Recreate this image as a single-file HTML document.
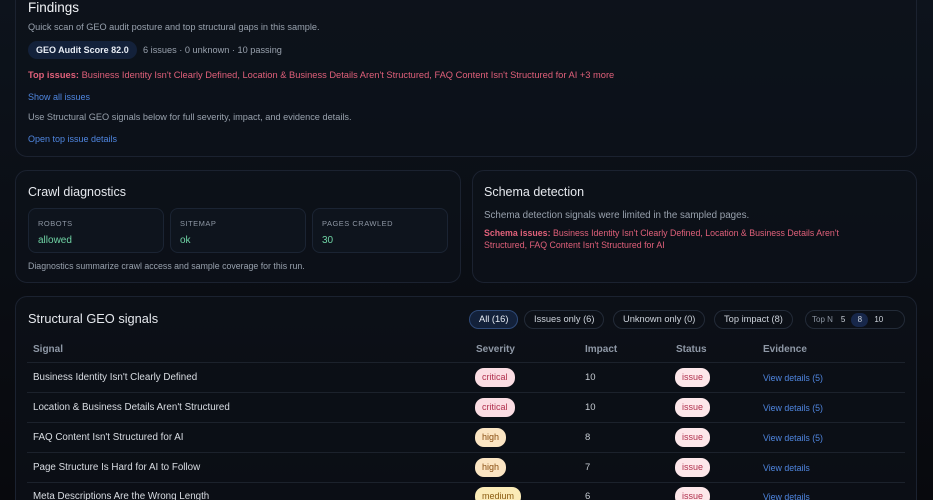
<!DOCTYPE html><html style="width:933px;height:500px;overflow:hidden;background:#08090d"><head><style>
*{box-sizing:border-box;margin:0;padding:0}
body{width:933px;height:500px;overflow:hidden;background:linear-gradient(180deg,#0d131c 0%,#0a0d13 60%,#08090d 100%);font-family:"Liberation Sans",sans-serif;color:#e6e9ee;position:relative}
.card{position:absolute;border:1px solid #1b2230;border-radius:12px;background:rgba(14,19,27,.6)}
.a{position:absolute;white-space:nowrap}
.m{color:#98a1ad;font-size:9px}
.lnk{color:#4f86e0;font-size:9px}
.red{color:#e0607a;font-size:9px}
.stat{position:absolute;top:208px;height:45px;border:1px solid #1b2433;border-radius:8px;background:#0e141d}
.stat .l{position:absolute;left:9px;top:10px;font-size:7.5px;letter-spacing:.5px;color:#8d96a3}
.stat .v{position:absolute;left:9px;top:26px;font-size:10px;color:#6fd3a4}
.pill{position:absolute;height:19px;border:1px solid #232b38;border-radius:10px;font-size:9.3px;color:#cdd3db;line-height:17px;padding:0 9px;top:310px}
.hd{position:absolute;top:344px;font-size:10px;color:#8f98a6;font-weight:bold}
.ln{position:absolute;left:27px;width:878px;height:1px;background:#1c222c}
.sig{position:absolute;left:33px;font-size:9.8px;color:#d9dde3}
.b{position:absolute;height:19px;border-radius:9px;font-size:9px;line-height:19px;padding:0 7px}
.crit{background:#fbdde3;color:#b0304d}
.high{background:#fbe5c3;color:#8a4f12}
.med{background:#fbebb7;color:#8a5c10}
.iss{background:#fde7ea;color:#b0304d;left:675px}
.imp{position:absolute;left:585px;font-size:9.5px;color:#c7ccd3}
.ev{position:absolute;left:763px;font-size:8.8px;color:#4f86e0}
</style></head><body>
<div class="card" style="left:15px;top:-12px;width:902px;height:169px"></div>
<div class="a" style="left:28px;top:0px;font-size:13.5px;color:#f1f3f6">Findings</div>
<div class="a m" style="left:28px;top:22px;font-size:9.2px">Quick scan of GEO audit posture and top structural gaps in this sample.</div>
<div class="a" style="left:28px;top:41px;height:18px;padding:0 8px;border-radius:9px;background:#13213a;font-size:9px;line-height:18px;color:#e8edf5;font-weight:bold">GEO Audit Score 82.0</div>
<div class="a m" style="left:143px;top:45px;font-size:9.2px">6 issues · 0 unknown · 10 passing</div>
<div class="a red" style="left:28px;top:70px;font-size:9.3px"><b>Top issues:</b> Business Identity Isn't Clearly Defined, Location &amp; Business Details Aren't Structured, FAQ Content Isn't Structured for AI +3 more</div>
<div class="a lnk" style="left:28px;top:92px">Show all issues</div>
<div class="a m" style="left:28px;top:112px;font-size:9.2px">Use Structural GEO signals below for full severity, impact, and evidence details.</div>
<div class="a lnk" style="left:28px;top:134px">Open top issue details</div>

<div class="card" style="left:15px;top:170px;width:446px;height:113px"></div>
<div class="a" style="left:28px;top:185px;font-size:12.5px">Crawl diagnostics</div>
<div class="stat" style="left:28px;width:136px"><div class="l">ROBOTS</div><div class="v">allowed</div></div>
<div class="stat" style="left:170px;width:136px"><div class="l">SITEMAP</div><div class="v">ok</div></div>
<div class="stat" style="left:312px;width:136px"><div class="l">PAGES CRAWLED</div><div class="v">30</div></div>
<div class="a m" style="left:28px;top:261px;font-size:8.8px">Diagnostics summarize crawl access and sample coverage for this run.</div>

<div class="card" style="left:472px;top:170px;width:445px;height:113px"></div>
<div class="a" style="left:484px;top:185px;font-size:12.5px">Schema detection</div>
<div class="a m" style="left:484px;top:210px;font-size:9.8px">Schema detection signals were limited in the sampled pages.</div>
<div class="a red" style="left:484px;top:227px;font-size:8.8px;white-space:normal;width:385px;line-height:12px"><b>Schema issues:</b> Business Identity Isn't Clearly Defined, Location &amp; Business Details Aren't Structured, FAQ Content Isn't Structured for AI</div>

<div class="card" style="left:15px;top:296px;width:902px;height:220px"></div>
<div class="a" style="left:28px;top:311px;font-size:12.8px">Structural GEO signals</div>
<div class="pill" style="left:469px;background:#13213a;border-color:#2f4a78;color:#e8edf5">All (16)</div>
<div class="pill" style="left:524px">Issues only (6)</div>
<div class="pill" style="left:613px">Unknown only (0)</div>
<div class="pill" style="left:714px">Top impact (8)</div>
<div class="pill" style="left:805px;width:100px;padding:0 6px;font-size:8px"><span style="color:#8d96a3">Top N</span><span style="margin-left:8px">5</span><span style="display:inline-block;margin-left:6px;width:17px;height:14px;line-height:14px;text-align:center;border-radius:7px;background:#17274a">8</span><span style="margin-left:6px">10</span></div>
<div class="hd" style="left:33px">Signal</div><div class="hd" style="left:476px">Severity</div><div class="hd" style="left:585px">Impact</div><div class="hd" style="left:676px">Status</div><div class="hd" style="left:763px">Evidence</div>
<div class="ln" style="top:362px"></div><div class="ln" style="top:392px"></div><div class="ln" style="top:422px"></div><div class="ln" style="top:452px"></div><div class="ln" style="top:482px"></div>

<div class="sig" style="top:372px">Business Identity Isn't Clearly Defined</div>
<div class="b crit" style="left:475px;top:368px">critical</div><div class="imp" style="top:372px">10</div><div class="b iss" style="top:368px">issue</div><div class="ev" style="top:373px">View details (5)</div>

<div class="sig" style="top:402px">Location &amp; Business Details Aren't Structured</div>
<div class="b crit" style="left:475px;top:398px">critical</div><div class="imp" style="top:402px">10</div><div class="b iss" style="top:398px">issue</div><div class="ev" style="top:403px">View details (5)</div>

<div class="sig" style="top:432px">FAQ Content Isn't Structured for AI</div>
<div class="b high" style="left:475px;top:428px">high</div><div class="imp" style="top:432px">8</div><div class="b iss" style="top:428px">issue</div><div class="ev" style="top:433px">View details (5)</div>

<div class="sig" style="top:462px">Page Structure Is Hard for AI to Follow</div>
<div class="b high" style="left:475px;top:458px">high</div><div class="imp" style="top:462px">7</div><div class="b iss" style="top:458px">issue</div><div class="ev" style="top:463px">View details</div>

<div class="sig" style="top:491px">Meta Descriptions Are the Wrong Length</div>
<div class="b med" style="left:475px;top:487px">medium</div><div class="imp" style="top:491px">6</div><div class="b iss" style="top:487px">issue</div><div class="ev" style="top:492px">View details</div>
</body></html>
